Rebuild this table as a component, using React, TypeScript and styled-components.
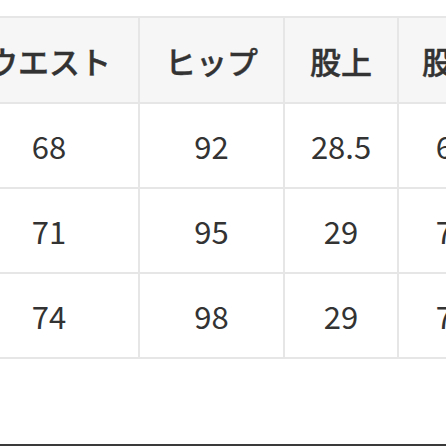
import styled, { createGlobalStyle } from "styled-components";

const headers = ["ウエスト", "ヒップ", "股上", "股下"];
const rows = [
  ["68", "92", "28.5", "68"],
  ["71", "95", "29", "70"],
  ["74", "98", "29", "72"],
];
const widths = [180, 145, 114, 110];

export default function App() {
  return (
    <Page>
      <GlobalStyle />
      <TableArea>
        <SizeTable>
          <colgroup>
            {widths.map((w, i) => (
              <col key={i} style={{ width: w }} />
            ))}
          </colgroup>
          <thead>
            <tr>
              {headers.map((h) => (
                <HeadCell key={h}>{h}</HeadCell>
              ))}
            </tr>
          </thead>
          <tbody>
            {rows.map((r, i) => (
              <tr key={i}>
                {r.map((v, j) => (
                  <Cell key={j}>{v}</Cell>
                ))}
              </tr>
            ))}
          </tbody>
        </SizeTable>
      </TableArea>
      <BottomRule />
    </Page>
  );
}

const GlobalStyle = createGlobalStyle`
  html, body {
    margin: 0;
    padding: 0;
    background: #fff;
  }
`;

const Page = styled.div`
  width: 446px;
  height: 446px;
  display: flex;
  flex-direction: column;
  overflow: hidden;
  font-family: "Noto Sans CJK JP", "Noto Sans", sans-serif;
  color: #333;
`;

const TableArea = styled.div`
  flex: 1;
  padding-top: 16px;
  overflow: hidden;
`;

const SizeTable = styled.table`
  border-collapse: collapse;
  table-layout: fixed;
  width: 549px;
  margin-left: -42px;
`;

const HeadCell = styled.th`
  height: 84px;
  padding: 0;
  background: #f6f6f6;
  border: 2px solid #e6e6e6;
  font-size: 31px;
  font-weight: 500;
  -webkit-text-stroke: 0.4px #333;
  text-align: center;
  white-space: nowrap;
`;

const Cell = styled.td`
  height: 83px;
  padding: 0;
  border: 2px solid #e6e6e6;
  font-size: 31px;
  font-weight: 400;
  text-align: center;
  white-space: nowrap;
`;

const BottomRule = styled.div`
  height: 2px;
  background: #3a3a3a;
`;
